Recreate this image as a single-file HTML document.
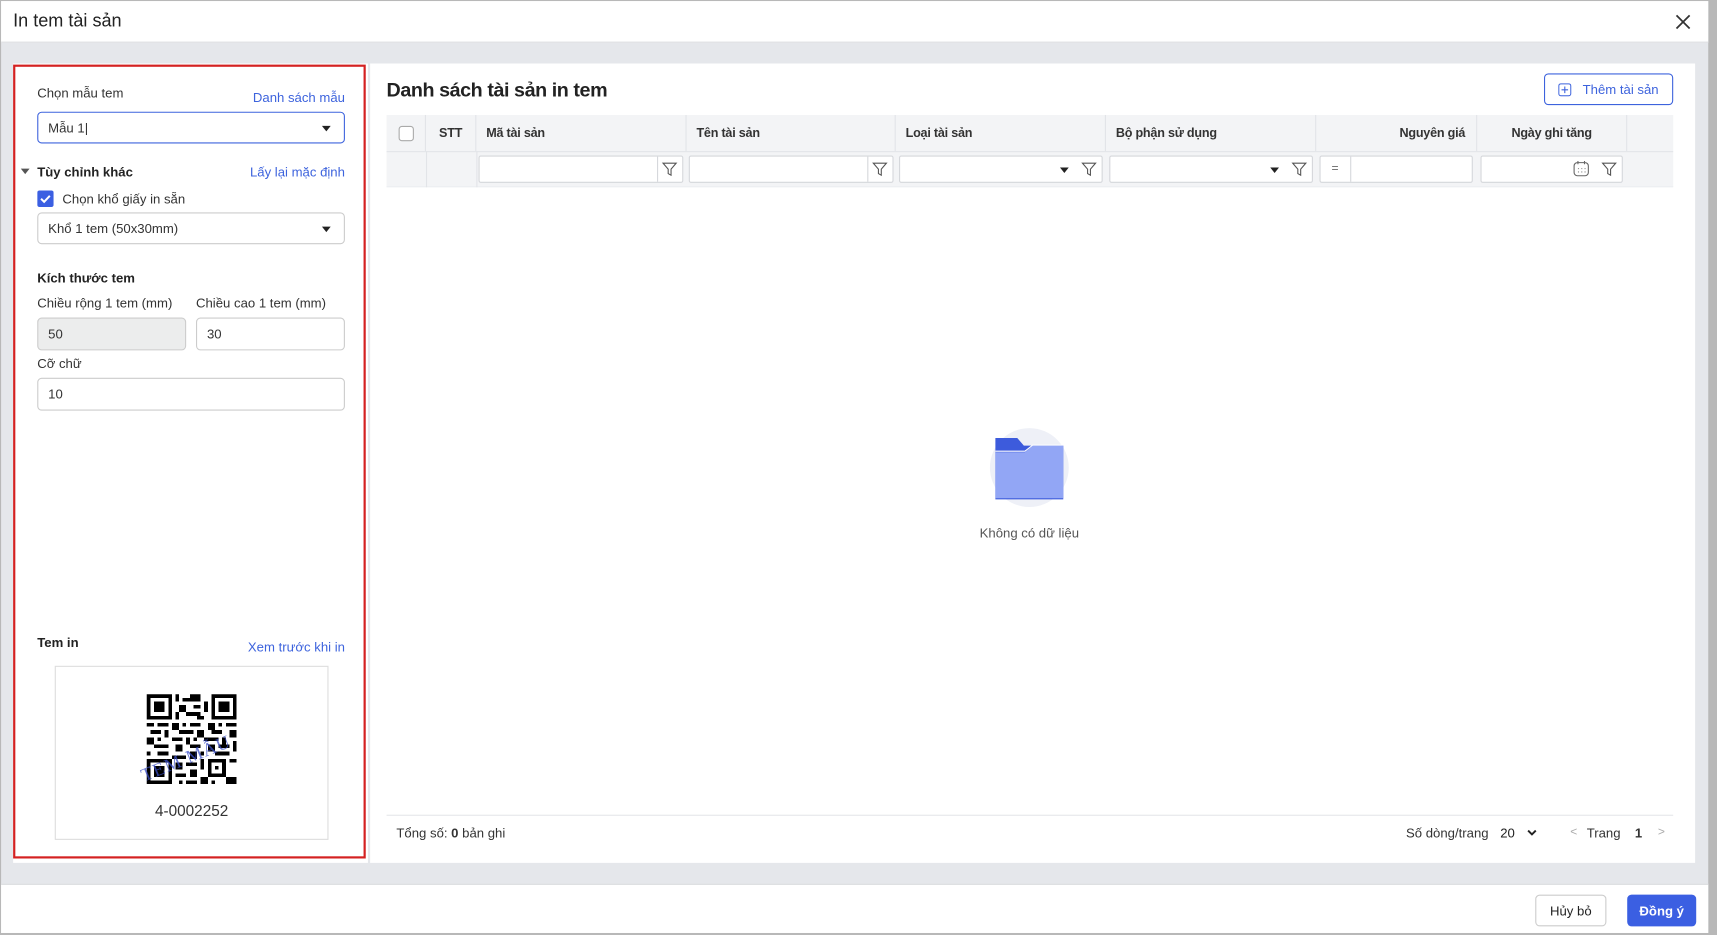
<!DOCTYPE html>
<html><head><meta charset="utf-8"><style>
*{box-sizing:border-box;margin:0;padding:0}
html,body{width:1717px;height:935px;overflow:hidden;background:#9a9a9a}
body{font-family:"Liberation Sans",sans-serif;color:#333}
#w{position:absolute;left:0;top:0;width:1568px;height:854px;transform:scale(1.09503);transform-origin:0 0;background:#b8b8b8}
.a{position:absolute}
.dlg{left:1px;top:1px;width:1559px;height:851px;background:#e5e7eb}
.lbl{font-size:12px;color:#333}
.lnk{font-size:12px;color:#3d63dd}
.b{font-weight:bold;font-size:12px;color:#222}
.inp{border:1px solid #ccc;border-radius:4px;background:#fff;font-size:12px;padding-left:9px;display:flex;align-items:center}
.car{position:absolute;right:12px;top:50%;margin-top:-2px;border-left:4px solid transparent;border-right:4px solid transparent;border-top:5px solid #222}
.th{position:absolute;top:105px;height:33px;font-size:11.5px;letter-spacing:-0.2px;font-weight:bold;color:#333;display:flex;align-items:center;border-right:1px solid #e2e4e8}
.fi{position:absolute;top:142px;height:25px;background:#fff;border:1px solid #d5d7db;border-radius:2px}
</style></head><body><div id="w">
<div class="a dlg"></div>
<div class="a" style="left:1px;top:1px;width:1559px;height:38px;background:#fff;border-bottom:1px solid #dcdde0"></div>
<div class="a" style="left:12px;top:10px;font-size:16.5px;color:#222">In tem tài sản</div>
<svg class="a" style="left:1529px;top:12px" width="16" height="16" viewBox="0 0 16 16"><path d="M2 2L14 14M14 2L2 14" stroke="#333" stroke-width="1.6"/></svg>
<div class="a" style="left:1px;top:807px;width:1559px;height:45px;background:#fff;border-top:1px solid #d6d7da"></div>
<div class="a" style="left:1402px;top:817px;width:65px;height:29px;border:1px solid #ccc;border-radius:4px;background:#fff;font-size:12px;display:flex;align-items:center;justify-content:center;color:#222">Hủy bỏ</div>
<div class="a" style="left:1486px;top:817px;width:63px;height:29px;border-radius:4px;background:#3b5fe2;font-size:12px;font-weight:bold;display:flex;align-items:center;justify-content:center;color:#fff">Đồng ý</div>
<div class="a" style="left:12px;top:58px;width:324px;height:730px;background:#fff"></div>
<div class="a" style="left:12px;top:59px;width:322px;height:725px;border:2px solid #d42121"></div>
<div class="a lbl" style="left:34px;top:78px">Chọn mẫu tem</div>
<div class="a lnk" style="right:1253px;top:82px">Danh sách mẫu</div>
<div class="a inp" style="left:34px;top:102px;width:281px;height:29px;border-color:#3d63dd">Mẫu 1|<span class="car"></span></div>
<div class="a" style="left:19px;top:154px;border-left:4px solid transparent;border-right:4px solid transparent;border-top:5px solid #555"></div>
<div class="a b" style="left:34px;top:150px">Tùy chỉnh khác</div>
<div class="a lnk" style="right:1253px;top:150px">Lấy lại mặc định</div>
<svg class="a" style="left:34px;top:174px" width="15" height="15"><rect width="15" height="15" rx="2" fill="#3b5fe2"/><path d="M3.5 7.5L6.3 10.3L11.5 4.8" stroke="#fff" stroke-width="1.8" fill="none"/></svg>
<div class="a lbl" style="left:57px;top:175px">Chọn khổ giấy in sẵn</div>
<div class="a inp" style="left:34px;top:194px;width:281px;height:29px">Khổ 1 tem (50x30mm)<span class="car"></span></div>
<div class="a b" style="left:34px;top:247px">Kích thước tem</div>
<div class="a lbl" style="left:34px;top:270px">Chiều rộng 1 tem (mm)</div>
<div class="a lbl" style="left:179px;top:270px">Chiều cao 1 tem (mm)</div>
<div class="a inp" style="left:34px;top:290px;width:136px;height:30px;background:#eceded">50</div>
<div class="a inp" style="left:179px;top:290px;width:136px;height:30px">30</div>
<div class="a lbl" style="left:34px;top:325px">Cỡ chữ</div>
<div class="a inp" style="left:34px;top:345px;width:281px;height:30px">10</div>
<div class="a b" style="left:34px;top:580px">Tem in</div>
<div class="a lnk" style="right:1253px;top:584px">Xem trước khi in</div>
<div class="a" style="left:50px;top:608px;width:250px;height:159px;border:1px solid #ddd"></div>
<svg class="a" style="left:134px;top:634px" width="82" height="82" viewBox="0 0 25 25" shape-rendering="crispEdges">
<g fill="#000"><path d="M0 0h7v7h-7zM18 0h7v7h-7zM0 18h7v7h-7z"/></g>
<g fill="#fff"><path d="M1 1h5v5h-5zM19 1h5v5h-5zM1 19h5v5h-5z"/></g>
<g fill="#000"><path d="M2 2h3v3h-3zM20 2h3v3h-3zM2 20h3v3h-3z
M8 0h1v2h-1zM10 1h2v1h-2zM9 3h2v2h-2zM12 0h3v2h-3zM13 3h2v1h-2zM16 2h1v3h-1zM8 5h1v2h-1zM11 5h4v1h-4zM14 6h2v1h-2z
M0 8h2v1h-2zM3 8h3v1h-3zM7 8h2v2h-2zM10 8h1v1h-1zM12 8h3v1h-3zM17 8h2v2h-2zM20 8h1v1h-1zM22 8h3v1h-3z
M1 10h3v1h-3zM5 10h1v2h-1zM9 10h4v1h-4zM14 10h2v2h-2zM18 10h3v1h-3zM23 10h2v2h-2z
M0 12h2v2h-2zM3 12h1v1h-1zM7 12h3v1h-3zM11 12h1v2h-1zM13 12h1v1h-1zM16 12h4v1h-4zM21 12h1v2h-1z
M2 14h4v1h-4zM8 14h2v2h-2zM12 14h3v1h-3zM17 14h2v2h-2zM20 14h3v1h-3zM24 13h1v3h-1z
M0 16h1v1h-1zM3 16h3v1h-3zM7 17h4v1h-4zM12 16h2v2h-2zM15 16h1v1h-1zM19 16h4v1h-4z
M8 19h2v2h-2zM11 19h3v1h-3zM15 18h1v3h-1zM17 18h5v5h-5zM23 18h2v1h-2z
M8 22h3v1h-3zM12 21h2v2h-2zM9 24h1v1h-1zM11 24h3v1h-3zM15 23h2v2h-2zM22 23h3v2h-3zM18 24h1v1h-1z"/></g>
<rect x="18" y="19" width="3" height="3" fill="#fff"/><rect x="19" y="20" width="1" height="1" fill="#000"/>
</svg>
<div class="a" style="left:126px;top:700px;font-family:'Liberation Serif',serif;font-size:17px;color:#3b4fc8;opacity:.75;transform:rotate(-22deg);transform-origin:0 0;letter-spacing:1px">TEM MẪU</div>
<div class="a" style="left:50px;top:732px;width:250px;text-align:center;font-size:14px;color:#333">4-0002252</div>
<div class="a" style="left:338px;top:58px;width:1210px;height:730px;background:#fff"></div>
<div class="a" style="left:353px;top:72px;font-size:18px;letter-spacing:-0.4px;font-weight:bold;color:#222">Danh sách tài sản in tem</div>
<div class="a" style="left:1410px;top:67px;width:118px;height:29px;border:1px solid #3d63dd;border-radius:4px;display:flex;align-items:center;justify-content:center;gap:10px;font-size:12px;color:#3d63dd"><svg width="12" height="12"><rect x=".5" y=".5" width="11" height="11" rx="2" fill="none" stroke="#3d63dd"/><path d="M6 3v6M3 6h6" stroke="#3d63dd"/></svg>Thêm tài sản</div>
<div class="a" style="left:353px;top:105px;width:1175px;height:66px;background:#f3f4f6;border-bottom:1px solid #eceef1"></div>
<div class="a" style="left:353px;top:138px;width:1175px;height:1px;background:#e2e4e8"></div>
<div class="th" style="left:353px;width:36px;justify-content:center"><span style="width:14px;height:14px;border:1px solid #aaa;border-radius:3px;background:#fff;display:block"></span></div>
<div class="th" style="left:389px;width:46px;justify-content:center">STT</div>
<div class="th" style="left:435px;width:192px;padding-left:9px">Mã tài sản</div>
<div class="th" style="left:627px;width:191px;padding-left:9px">Tên tài sản</div>
<div class="th" style="left:818px;width:192px;padding-left:9px">Loại tài sản</div>
<div class="th" style="left:1010px;width:192px;padding-left:9px">Bộ phận sử dụng</div>
<div class="th" style="left:1202px;width:147px;justify-content:flex-end;padding-right:10px">Nguyên giá</div>
<div class="th" style="left:1349px;width:137px;justify-content:center">Ngày ghi tăng</div>
<div class="a" style="left:389px;top:138px;width:1px;height:33px;background:#e2e4e8"></div>
<div class="a" style="left:435px;top:138px;width:1px;height:33px;background:#e2e4e8"></div>
<div class="fi" style="left:437px;width:187px"><div style="position:absolute;left:162px;top:0;width:1px;height:23px;background:#d5d7db"></div></div>
<div class="fi" style="left:629px;width:187px"><div style="position:absolute;left:162px;top:0;width:1px;height:23px;background:#d5d7db"></div></div>
<div class="fi" style="left:821px;width:186px"><span class="car" style="right:30px"></span></div>
<div class="fi" style="left:1013px;width:186px"><span class="car" style="right:30px"></span></div>
<div class="fi" style="left:1205px;width:140px;font-size:11px;color:#666"><span style="position:absolute;left:10px;top:5px">=</span><div style="position:absolute;left:27px;top:0;width:1px;height:23px;background:#d5d7db"></div></div>
<div class="fi" style="left:1352px;width:130px"></div>
<svg class="a" style="left:604px;top:147px" width="15" height="15" viewBox="0 0 15 15"><path d="M1.5 2h12l-4.7 5.5v5.5l-2.6-1.5v-4z" fill="none" stroke="#555"/></svg>
<svg class="a" style="left:796px;top:147px" width="15" height="15" viewBox="0 0 15 15"><path d="M1.5 2h12l-4.7 5.5v5.5l-2.6-1.5v-4z" fill="none" stroke="#555"/></svg>
<svg class="a" style="left:987px;top:147px" width="15" height="15" viewBox="0 0 15 15"><path d="M1.5 2h12l-4.7 5.5v5.5l-2.6-1.5v-4z" fill="none" stroke="#555"/></svg>
<svg class="a" style="left:1179px;top:147px" width="15" height="15" viewBox="0 0 15 15"><path d="M1.5 2h12l-4.7 5.5v5.5l-2.6-1.5v-4z" fill="none" stroke="#555"/></svg>
<svg class="a" style="left:1462px;top:147px" width="15" height="15" viewBox="0 0 15 15"><path d="M1.5 2h12l-4.7 5.5v5.5l-2.6-1.5v-4z" fill="none" stroke="#555"/></svg>
<svg class="a" style="left:1436px;top:146px" width="16" height="16" viewBox="0 0 16 16"><rect x="1.5" y="2.5" width="13" height="12" rx="3" fill="none" stroke="#666"/><path d="M5 1v3M11 1v3" stroke="#666"/><path d="M5 8h1M8 8h1M11 8h1M5 11h1M8 11h1M11 11h1" stroke="#888"/></svg>
<div class="a" style="left:904px;top:391px;width:72px;height:72px;border-radius:50%;background:#eef0f7"></div>
<svg class="a" style="left:908px;top:398px" width="64" height="58" viewBox="0 0 64 58"><path d="M1 2h20l6 7h36v50h-62z" fill="#3d5bdc"/><path d="M1 15h27l7-6h28v48h-62z" fill="#92a6f5"/><path d="M1 14h27l7-5.5h28" stroke="#fff" stroke-width="1" fill="none"/></svg>
<div class="a" style="left:880px;top:480px;width:120px;text-align:center;font-size:12px;color:#555">Không có dữ liệu</div>
<div class="a" style="left:353px;top:744px;width:1175px;height:1px;background:#e5e6e9"></div>
<div class="a lbl" style="left:362px;top:754px">Tổng số: <b>0</b> bản ghi</div>
<div class="a lbl" style="left:1284px;top:754px">Số dòng/trang</div>
<div class="a lbl" style="left:1370px;top:754px;color:#222">20</div>
<svg class="a" style="left:1394px;top:757px" width="10" height="8"><path d="M1.5 1.5L5 5L8.5 1.5" stroke="#222" stroke-width="1.8" fill="none"/></svg>
<div class="a" style="left:1434px;top:754px;font-size:11px;color:#aaa">&lt;</div>
<div class="a lbl" style="left:1449px;top:754px">Trang</div>
<div class="a lbl" style="left:1493px;top:754px;font-weight:bold">1</div>
<div class="a" style="left:1514px;top:754px;font-size:11px;color:#aaa">&gt;</div>
</div></body></html>
